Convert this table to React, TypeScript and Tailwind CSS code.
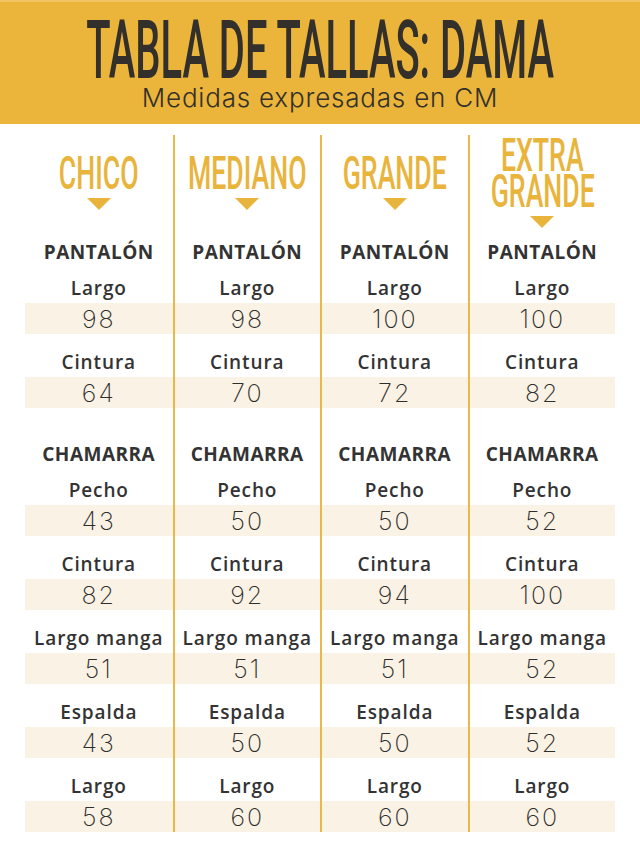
const sizes = [
  { name: ["CHICO"], pantalon: ["98", "64"], chamarra: ["43", "82", "51", "43", "58"] },
  { name: ["MEDIANO"], pantalon: ["98", "70"], chamarra: ["50", "92", "51", "50", "60"] },
  { name: ["GRANDE"], pantalon: ["100", "72"], chamarra: ["50", "94", "51", "50", "60"] },
  { name: ["EXTRA", "GRANDE"], pantalon: ["100", "82"], chamarra: ["52", "100", "52", "52", "60"] },
];

const pantalonLabels = ["Largo", "Cintura"];
const chamarraLabels = ["Pecho", "Cintura", "Largo manga", "Espalda", "Largo"];

function Row({ label, value, first }: { label: string; value: string; first?: boolean }) {
  return (
    <div>
      <div className={`flex items-end justify-center pb-[1px] ${first ? "h-[37px]" : "h-[43px]"}`}>
        <span className="whitespace-nowrap font-['Open_Sans',sans-serif] text-[19px] font-semibold leading-[28px] tracking-[0.9px] text-[#333]">
          {label}
        </span>
      </div>
      <div className="flex h-[31px] items-center justify-center bg-[#faf2e4] pt-[2px]">
        <span className="font-['Inter',sans-serif] text-[25px] font-extralight leading-none tracking-[2px] text-[#2e2e2e]">
          {value}
        </span>
      </div>
    </div>
  );
}

function SizeColumn({ size, index }: { size: (typeof sizes)[number]; index: number }) {
  return (
    <div className={`flex flex-col ${index > 0 ? "border-l-2 border-[#e8b84a]" : ""}`}>
      <div className="flex h-[95px] flex-col items-center justify-center">
        {size.name.map((n) => (
          <span
            key={n}
            className="inline-block h-[36px] scale-x-[0.58] whitespace-nowrap font-['Roboto',sans-serif] text-[46px] font-medium leading-[36px] text-[#e9b43c]"
          >
            {n}
          </span>
        ))}
        <div className="mt-[7px] h-0 w-0 border-x-[12px] border-t-[12px] border-x-transparent border-t-[#e9b43c]" />
      </div>

      <div className="pt-[8px] text-center font-['Open_Sans',sans-serif] text-[19px] font-bold leading-[28px] tracking-[0.5px] text-[#333]">
        PANTALÓN
      </div>
      {size.pantalon.map((v, i) => (
        <Row key={i} label={pantalonLabels[i]} value={v} first={i === 0} />
      ))}

      <div className="pt-[32px] text-center font-['Open_Sans',sans-serif] text-[19px] font-bold leading-[28px] tracking-[0.5px] text-[#333]">
        CHAMARRA
      </div>
      {size.chamarra.map((v, i) => (
        <Row key={i} label={chamarraLabels[i]} value={v} first={i === 0} />
      ))}
    </div>
  );
}

export default function App() {
  return (
    <div className="h-[854px] w-[640px] overflow-hidden bg-white">
      <div className="flex h-[124px] flex-col items-center border-t-2 border-[#f0c463] bg-[#ebb53b]">
        <span className="mt-[15px] inline-block scale-x-[0.487] whitespace-nowrap font-['Roboto',sans-serif] text-[82px] font-medium leading-[66px] text-[#33302c]">
          TABLA DE TALLAS: DAMA
        </span>
        <span className="mt-[0px] font-['Inter',sans-serif] text-[26px] font-light leading-[30px] tracking-[0.8px] text-[#33302c]">
          Medidas expresadas en CM
        </span>
      </div>

      <div className="mx-[25px] mt-[11px] grid grid-cols-4">
        {sizes.map((s, i) => (
          <SizeColumn key={i} size={s} index={i} />
        ))}
      </div>
    </div>
  );
}
